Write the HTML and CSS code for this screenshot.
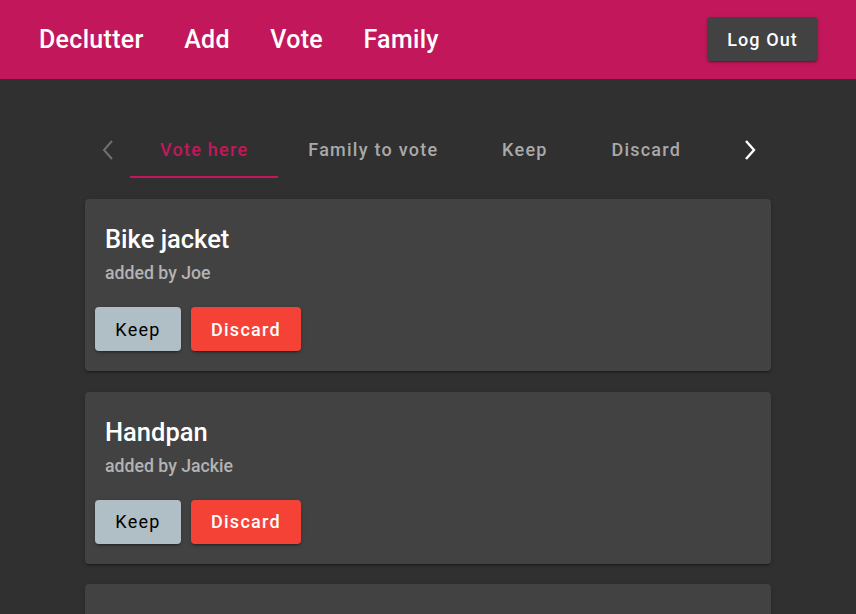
FILE: index.html
```html
<!DOCTYPE html>
<html>
<head>
<meta charset="utf-8">
<link rel="stylesheet" href="styles.css">
</head>
<body>
<header class="topbar">
  <nav class="nav">
    <a class="nav-link">Declutter</a>
    <a class="nav-link">Add</a>
    <a class="nav-link">Vote</a>
    <a class="nav-link">Family</a>
  </nav>
  <button class="logout">Log Out</button>
</header>
<main class="main">
  <div class="tabs">
    <div class="arrow arrow-disabled">
      <svg width="12" height="20" viewBox="0 0 12 20"><polyline points="10,1 2,10 10,19" fill="none" stroke="currentColor" stroke-width="2"/></svg>
    </div>
    <div class="tab tab-active">Vote here</div>
    <div class="tab">Family to vote</div>
    <div class="tab">Keep</div>
    <div class="tab">Discard</div>
    <div class="arrow arrow-right">
      <svg width="12" height="20" viewBox="0 0 12 20"><polyline points="2,1 10,10 2,19" fill="none" stroke="currentColor" stroke-width="2.4"/></svg>
    </div>
  </div>
  <div class="card">
    <div class="card-title">Bike jacket</div>
    <div class="card-sub">added by Joe</div>
    <div class="card-actions">
      <button class="btn btn-keep">Keep</button>
      <button class="btn btn-discard">Discard</button>
    </div>
  </div>
  <div class="card">
    <div class="card-title">Handpan</div>
    <div class="card-sub">added by Jackie</div>
    <div class="card-actions">
      <button class="btn btn-keep">Keep</button>
      <button class="btn btn-discard">Discard</button>
    </div>
  </div>
  <div class="card">
    <div class="card-title">Guitar</div>
    <div class="card-sub">added by Joe</div>
    <div class="card-actions">
      <button class="btn btn-keep">Keep</button>
      <button class="btn btn-discard">Discard</button>
    </div>
  </div>
</main>
</body>
</html>
```

FILE: styles.css
```css
* { box-sizing: border-box; }
html, body {
  margin: 0;
  padding: 0;
  background: #303030;
  font-family: Roboto, "Liberation Sans", sans-serif;
  height: 100%;
  overflow: hidden;
}
.topbar {
  height: 79px;
  background: #c2185b;
  display: flex;
  align-items: center;
  justify-content: space-between;
  padding: 0 38px 0 39px;
}
.nav {
  display: flex;
  gap: 40.5px;
}
.nav-link {
  color: #fff;
  font-size: 25px;
  font-weight: 500;
  letter-spacing: 0.3px;
}
.logout {
  height: 44px;
  width: 111px;
  background: #424242;
  color: #fff;
  border: none;
  border-radius: 4px;
  font-family: Roboto, "Liberation Sans", sans-serif;
  font-size: 18px;
  font-weight: 500;
  letter-spacing: 1.1px;
  margin-top: -1px;
  box-shadow: 0 3px 1px -2px rgba(0,0,0,.2), 0 2px 2px 0 rgba(0,0,0,.14), 0 1px 5px 0 rgba(0,0,0,.12);
}
.main {
  width: 686px;
  margin: 0 auto;
  padding-top: 41px;
}
.tabs {
  display: flex;
  height: 58px;
  align-items: stretch;
  margin-bottom: 21px;
}
.arrow {
  width: 45px;
  display: flex;
  align-items: center;
  justify-content: center;
  padding-top: 1px;
}
.arrow-disabled { color: #707070; }
.arrow-right { color: #fff; width: 42px; margin-left: auto; }
.tab {
  display: flex;
  align-items: center;
  justify-content: center;
  padding: 2px 30px 0;
  min-width: 113px;
  color: #a9a9a9;
  font-size: 18px;
  font-weight: 500;
  letter-spacing: 1.25px;
  border-bottom: 2px solid transparent;
}
.tab-active {
  color: #c2185b;
  border-bottom-color: #c2185b;
}
.card {
  background: #424242;
  border-radius: 4px;
  padding: 24px 10px 20px;
  margin-bottom: 20.5px;
  box-shadow: 0 3px 1px -2px rgba(0,0,0,.2), 0 2px 2px 0 rgba(0,0,0,.14), 0 1px 5px 0 rgba(0,0,0,.12);
}
.card-title {
  color: #fff;
  font-size: 25.5px;
  font-weight: 500;
  line-height: 32px;
  padding: 0 10px;
}
.card-sub {
  color: #b3b3b3;
  font-size: 17.7px;
  font-weight: 500;
  line-height: 22px;
  padding: 0 10px;
  margin-top: 7px;
}
.card-actions {
  display: flex;
  gap: 10px;
  margin-top: 23px;
}
.btn {
  height: 44px;
  border: none;
  border-radius: 4px;
  font-family: Roboto, "Liberation Sans", sans-serif;
  font-size: 18px;
  font-weight: 500;
  letter-spacing: 1.3px;
  padding: 0;
  box-shadow: 0 3px 1px -2px rgba(0,0,0,.2), 0 2px 2px 0 rgba(0,0,0,.14), 0 1px 5px 0 rgba(0,0,0,.12);
}
.btn-keep { background: #b0bec5; color: #000; width: 86px; font-weight: 400; }
.btn-discard { background: #f44336; color: #fff; width: 110px; }
```
